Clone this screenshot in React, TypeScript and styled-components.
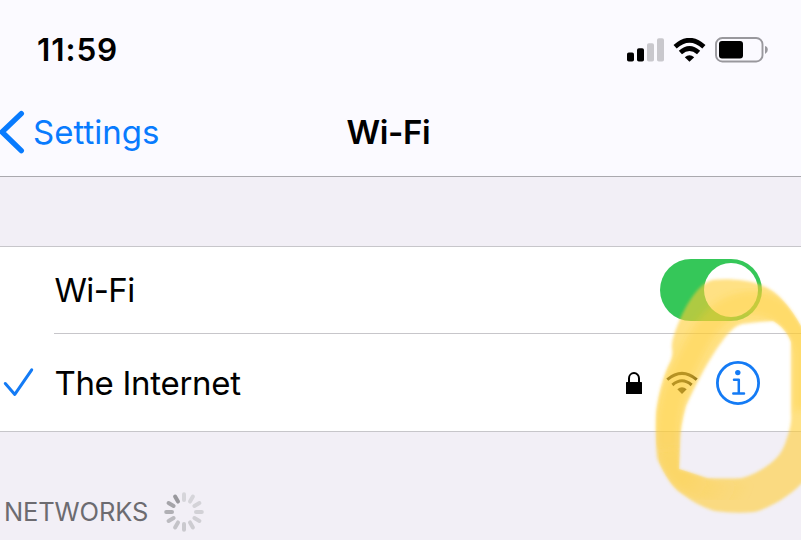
import React from "react";
import styled, { createGlobalStyle } from "styled-components";

const GlobalStyle = createGlobalStyle`
  *, *::before, *::after { box-sizing: border-box; }
  html, body { margin: 0; background: #f2eff6; overflow: hidden; }
  body { font-family: Inter, "Liberation Sans", sans-serif; color: #000; }
  svg { display: block; flex: none; }
`;

const Screen = styled.main`
  position: relative;
  width: 801px;
  height: 540px;
  overflow: hidden;
  background: #f2eff6;
  display: flex;
  flex-direction: column;
`;

const Header = styled.header`
  height: 177px;
  flex: none;
  background: #fbfaff;
  border-bottom: 1px solid #aaa9ae;
`;

const StatusBar = styled.div`
  height: 88px;
  padding: 11px 33px 0 37px;
  display: flex;
  align-items: center;
  justify-content: space-between;
`;

const StatusIcons = styled.div`
  display: flex;
  align-items: center;
  gap: 9px;
`;

const NavBar = styled.nav`
  height: 88px;
  display: grid;
  grid-template-columns: 346.5px auto 1fr;
  align-items: center;
`;

const BackButton = styled.a`
  display: flex;
  align-items: center;
  gap: 8px;
  color: #087bfe;
`;

const Label = styled.span<{ $size: number; $weight?: number; $tracking?: number }>`
  font-size: ${(p) => p.$size}px;
  font-weight: ${(p) => p.$weight ?? 400};
  letter-spacing: ${(p) => p.$tracking ?? 0}px;
  line-height: 40px;
  white-space: nowrap;
`;

const Group = styled.section`
  margin-top: 69px;
  flex: none;
  background: #fff;
  border-top: 1px solid #c7c6ca;
  border-bottom: 1px solid #c7c6ca;
`;

const Row = styled.div<{ $height: number }>`
  height: ${(p) => p.$height}px;
  display: grid;
  grid-template-columns: 54px 1fr;
`;

const RowMark = styled.div`
  display: flex;
  align-items: center;
  padding-left: 3px;
`;

const RowBody = styled.div<{ $divided?: boolean; $right: number }>`
  display: flex;
  align-items: center;
  justify-content: space-between;
  padding: 0 ${(p) => p.$right}px 0 0.4px;
  border-bottom: ${(p) => (p.$divided ? "1px solid #c7c6ca" : "none")};
`;

const Toggle = styled.div`
  width: 102px;
  height: 62px;
  padding: 4px;
  border-radius: 31px;
  background: #35c759;
  display: flex;
  justify-content: flex-end;
`;

const Knob = styled.div`
  width: 54px;
  height: 54px;
  border-radius: 50%;
  background: #fff;
`;

const NetworkIcons = styled.div`
  display: flex;
  align-items: center;
`;

const LockSlot = styled.div`
  margin-right: 24px;
`;

const InfoSlot = styled.div`
  margin-left: 18px;
`;

const SectionTitle = styled.div`
  height: 42px;
  margin-top: 59px;
  padding-left: 4px;
  display: flex;
  align-items: center;
  gap: 15px;
  color: #6c6b70;
`;

const Highlight = styled.svg`
  position: absolute;
  inset: 0;
  pointer-events: none;
`;

const Signal = () => (
  <svg width="37" height="24" viewBox="0 0 37 24">
    <rect x="0" y="14.5" width="7" height="9" rx="1.8" />
    <rect x="10" y="10.2" width="7" height="13.3" rx="1.8" />
    <rect x="20" y="5.2" width="7" height="18.3" rx="1.8" fill="#c9c8cd" />
    <rect x="30" y="0.3" width="7" height="23.2" rx="1.8" fill="#c9c8cd" />
  </svg>
);

const StatusWifi = () => (
  <svg width="33" height="24" viewBox="0 0 33 24" fill="none" stroke="#000" strokeWidth="4.7">
    <path d="M2.1 8.8Q16.5 -4.3 30.9 8.8" />
    <path d="M7.4 14.6Q16.5 6.3 25.6 14.6" />
    <path d="M11.8 19.2Q16.5 15.4 21.2 19.2L16.5 23.8Z" fill="#000" stroke="none" />
  </svg>
);

const Battery = () => (
  <svg width="53" height="26" viewBox="0 0 53 26">
    <rect x="1" y="1" width="46.5" height="23.5" rx="6.3" fill="none" stroke="#99989d" strokeWidth="1.9" />
    <rect x="4" y="4" width="24" height="17.5" rx="3" />
    <path d="M50 9Q52.8 9.8 52.8 12.8T50 17Z" fill="#99989d" />
  </svg>
);

const Chevron = () => (
  <svg width="25" height="44" viewBox="0 0 25 44" fill="none" stroke="currentColor" strokeWidth="5.4" strokeLinecap="round">
    <path d="M21.3 3.6L2 22L21.3 40.6" />
  </svg>
);

const Check = () => (
  <svg width="32" height="32" viewBox="0 0 32 32" fill="none" stroke="#147bf5" strokeWidth="3" strokeLinecap="round" strokeLinejoin="round">
    <path d="M2.3 16.5L11.8 27.4L28.7 2.8" />
  </svg>
);

const Lock = () => (
  <svg width="16" height="24" viewBox="0 0 16 24">
    <path d="M3 12V7.3A5 5.2 0 0 1 13 7.3V12" fill="none" stroke="#000" strokeWidth="2" />
    <rect y="11" width="16" height="12" rx="0.5" />
  </svg>
);

const NetworkWifi = () => (
  <svg width="32" height="24" viewBox="0 0 32 24" fill="none" stroke="#000" strokeWidth="3">
    <path d="M1.3 8.6Q16 -3.9 30.7 8.6" />
    <path d="M6.4 14Q16 5.6 25.6 14" />
    <path d="M11.3 18.2Q16 14.2 20.7 18.2L16 22.9Z" fill="#000" stroke="none" />
  </svg>
);

const Info = () => (
  <svg width="44" height="44" viewBox="0 0 44 44" fill="none" stroke="#147bf5">
    <circle cx="22" cy="22" r="20.6" strokeWidth="2.8" />
    <circle cx="21.8" cy="11.6" r="2.7" fill="#147bf5" stroke="none" />
    <path d="M18 18.7H22.8V32.3M17.3 32.5H28" strokeWidth="2.5" strokeLinecap="round" strokeLinejoin="round" />
  </svg>
);

const spokeColors = [
  "#d6d5da", "#d6d5da", "#d4d3d8", "#d2d1d6", "#d0cfd4", "#cdccd1",
  "#cac9ce", "#c4c3c8", "#bcbbc0", "#b0afb4", "#a5a4a9", "#99989d",
];

const Spinner = () => (
  <svg width="42" height="42" viewBox="-21 -21 42 42" strokeWidth="4" strokeLinecap="round">
    {spokeColors.map((color, i) => (
      <path key={i} d="M0 -12V-17.8" stroke={color} transform={`rotate(${i * 30})`} />
    ))}
  </svg>
);

const markerOutline =
  "M656 412C658 396 663 375 671 360Q673 354 672 349C671 340 676 329 681 317C689 300 699 284 712 280C727 278 749 280 761 285C778 291 790 307 801 326L812 345V475L801 484C789 497 767 509 754 512Q735 514 715 511C701 507 690 500 678 491C669 483 661 468 657 458Q655 436 656 412Z" +
  "M679 469Q692 473 707 478Q725 479 742 478Q757 474 771 463C780 456 784 448 787 438Q792 424 791 414V342C788 333 781 325 773 321Q755 322 742 324C731 327 724 339 716 350C706 365 695 386 686 406Q680 427 680 445Z";

export default function App() {
  return (
    <>
      <GlobalStyle />
      <Screen>
        <Header>
          <StatusBar>
            <Label $size={31.5} $weight={600} $tracking={0.9}>11:59</Label>
            <StatusIcons>
              <Signal />
              <StatusWifi />
              <Battery />
            </StatusIcons>
          </StatusBar>
          <NavBar>
            <BackButton>
              <Chevron />
              <Label $size={33}>Settings</Label>
            </BackButton>
            <Label $size={33} $weight={600} $tracking={-0.4}>Wi-Fi</Label>
          </NavBar>
        </Header>
        <Group>
          <Row $height={87}>
            <RowMark />
            <RowBody $divided $right={39}>
              <Label $size={33} $tracking={-0.6}>Wi-Fi</Label>
              <Toggle><Knob /></Toggle>
            </RowBody>
          </Row>
          <Row $height={97}>
            <RowMark><Check /></RowMark>
            <RowBody $right={41}>
              <Label $size={33} $tracking={-0.3}>The Internet</Label>
              <NetworkIcons>
                <LockSlot><Lock /></LockSlot>
                <NetworkWifi />
                <InfoSlot><Info /></InfoSlot>
              </NetworkIcons>
            </RowBody>
          </Row>
        </Group>
        <SectionTitle>
          <Label $size={25.5} $tracking={-0.13}>NETWORKS</Label>
          <Spinner />
        </SectionTitle>
        <Highlight width="801" height="540" viewBox="0 0 801 540">
          <defs>
            <filter id="soft" x="-5%" y="-5%" width="110%" height="110%">
              <feGaussianBlur stdDeviation="1.4" />
            </filter>
            <filter id="streak" x="-10%" y="-10%" width="120%" height="120%">
              <feGaussianBlur stdDeviation="3.5" />
            </filter>
            <linearGradient id="fade" x1="690" y1="470" x2="745" y2="500" gradientUnits="userSpaceOnUse">
              <stop offset="0" stopColor="#ffcd30" stopOpacity="0.3" />
              <stop offset="1" stopColor="#ffcd30" stopOpacity="0" />
            </linearGradient>
            <clipPath id="band">
              <path clipRule="evenodd" d={markerOutline} />
            </clipPath>
          </defs>
          <path filter="url(#soft)" fill="#ffcd30" fillOpacity="0.6" fillRule="evenodd" d={markerOutline} />
          <g clipPath="url(#band)" fill="none" strokeWidth="23">
            <path
              d="M806 410V350C794 318 776 303 750 303C715 305 700 335 686 365C670 395 666 420 668 450"
              filter="url(#streak)"
              stroke="#ffcd30"
              strokeOpacity="0.3"
            />
            <path d="M668 450C674 485 705 494 750 495" filter="url(#streak)" stroke="url(#fade)" />
          </g>
        </Highlight>
      </Screen>
    </>
  );
}
